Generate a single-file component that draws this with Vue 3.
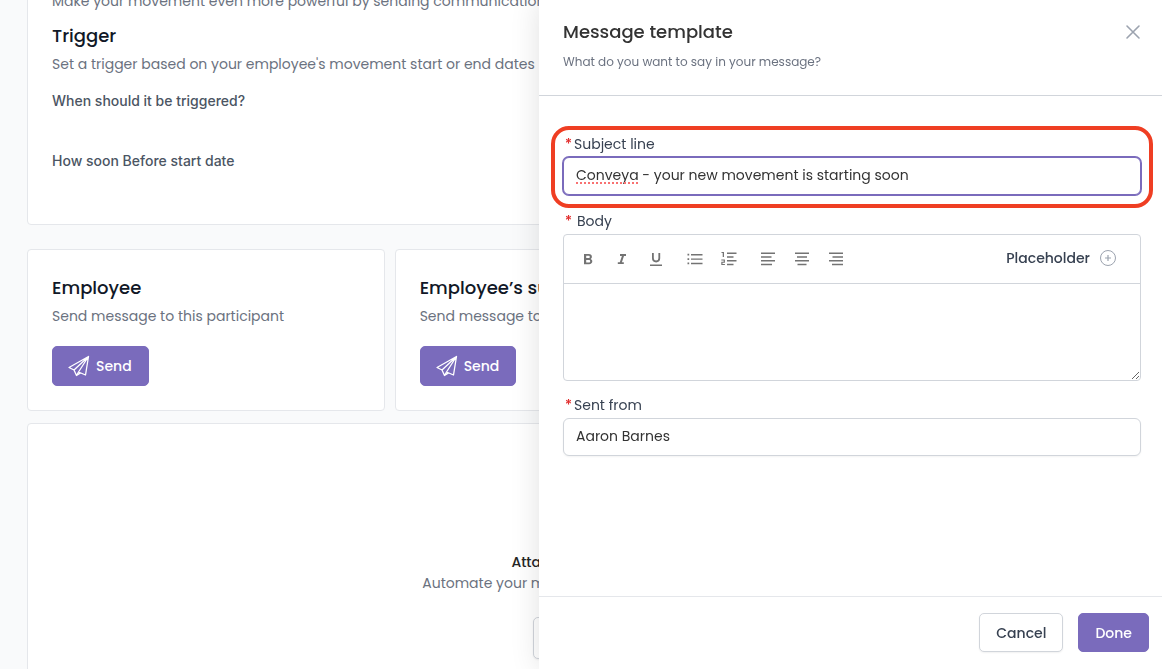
<script setup>
import { ref } from 'vue'

const subject = ref('Conveya - your new movement is starting soon')
const body = ref('')
const sender = ref('Aaron Barnes')

const recipients = [
  { title: 'Employee', text: 'Send message to this participant' },
  { title: 'Employee’s supervisor', text: 'Send message to this participant' },
]

const toolGroups = [
  [
    { name: 'Bold', fill: 'M5 4h4.800c1.900 0 3.100 1.100 3.100 2.700 0 1-.5 1.800-1.200 2.200 1 .4 1.600 1.300 1.600 2.400 0 1.700-1.300 2.900-3.200 2.900H5zM7.200 5.800v2.300h2.400c.7 0 1.200-.5 1.200-1.150S10.300 5.800 9.600 5.800zM7.200 9.900v2.500h2.700c.8 0 1.300-.5 1.300-1.250s-.5-1.250-1.300-1.250z' },
    { name: 'Italic', fill: 'M7 4h6v1.900h-2L8.900 12.200h1.900v1.900h-6v-1.900h2L8.900 5.900H7z' },
    { name: 'Underline', fill: 'M5 3h1.800v5.300a2.300 2.300 0 0 0 4.600 0V3h1.800v5.300a4.100 4.100 0 0 1-8.200 0zM3 14.500h12V16H3z' },
  ],
  [
    { name: 'Bulleted list', fill: 'M1.500 3.800h1.700v1.700H1.500zM1.500 8.200h1.700v1.700H1.500zM1.500 12.600h1.700v1.700H1.500zM5 4h11.500v1.400H5zM5 8.400h11.500v1.400H5zM5 12.800h11.500v1.400H5z' },
    { name: 'Numbered list', fill: 'M1.500 2h2.500v5H2.700V3.100H1.500zM1.300 9.500h3.600v3.200H2.500v1.200h2.400V15H1.300v-3.300h2.400v-1.100H1.300zM7 2.500h9.500v1.600H7zM7 6.200h6.500v1.600H7zM7 10h9.500v1.600H7zM7 13.700h6.500v1.600H7z' },
  ],
  [
    { name: 'Align left', fill: 'M2 2.500h14v1.600H2zM2 6.200h10.500v1.600H2zM2 10h14v1.600H2zM2 13.700h11v1.600H2z' },
    { name: 'Align center', fill: 'M2 2.500h14v1.600H2zM4 6.200h10v1.600H4zM2 10h14v1.600H2zM4.500 13.700h9v1.600h-9z' },
    { name: 'Align right', fill: 'M2 2.500h14v1.600H2zM5.500 6.200H16v1.600H5.500zM2 10h14v1.600H2zM5 13.700h11v1.600H5z' },
  ],
]
</script>

<template>
  <div class="page">
    <main class="content">
      <section class="card trigger">
        <p class="muted">Make your movement even more powerful by sending communications</p>
        <h2>Trigger</h2>
        <p class="muted">Set a trigger based on your employee's movement start or end dates</p>
        <h3>When should it be triggered?</h3>
        <h3>How soon Before start date</h3>
      </section>

      <div class="recipients">
        <section v-for="r in recipients" :key="r.title" class="card recipient">
          <h2>{{ r.title }}</h2>
          <p class="muted">{{ r.text }}</p>
          <button type="button" class="btn primary send">
            <svg width="22" height="22" viewBox="0 0 22 22" fill="none" stroke="currentColor" stroke-width="1.300" stroke-linejoin="round" stroke-linecap="round" aria-hidden="true">
              <path d="M20.500 1.500 1 12.500l5 2.500zM20.500 1.500 6 15l2.500 5.500L10.500 17zM20.500 1.500 10.500 17l7 3zM8.500 20.500l4-2.600" />
            </svg>
            Send
          </button>
        </section>
      </div>

      <section class="card attach">
        <h4>Attach document</h4>
        <p class="muted">Automate your movement with documents</p>
        <button type="button" class="btn outline add">Attach</button>
      </section>
    </main>

    <aside class="drawer" role="dialog" aria-labelledby="drawer-title">
      <header class="drawer-head">
        <div>
          <h1 id="drawer-title">Message template</h1>
          <p>What do you want to say in your message?</p>
        </div>
        <button type="button" class="close" aria-label="Close">
          <svg width="16" height="16" viewBox="0 0 16 16" fill="none" stroke="currentColor" stroke-width="1.600" stroke-linecap="round" aria-hidden="true">
            <path d="M2 2l12 12M14 2 2 14" />
          </svg>
        </button>
      </header>

      <form class="drawer-body" @submit.prevent>
        <div class="field highlight">
          <label for="subject"><span class="star">*</span>Subject line</label>
          <div class="input-wrap">
            <input id="subject" v-model="subject" class="focused" type="text" spellcheck="false" />
            <span class="squiggle" aria-hidden="true"></span>
          </div>
        </div>

        <div class="field body-field">
          <label for="body" class="spaced"><span class="star">*</span>Body</label>
          <div class="editor">
            <div class="toolbar">
              <div v-for="(group, i) in toolGroups" :key="i" class="tools">
                <button v-for="t in group" :key="t.name" type="button" class="tool" :aria-label="t.name">
                  <svg width="18" height="18" viewBox="0 0 18 18" fill="currentColor" fill-rule="evenodd" aria-hidden="true">
                    <path :d="t.fill" />
                  </svg>
                </button>
              </div>
              <button type="button" class="placeholder">
                Placeholder
                <svg width="18" height="18" viewBox="0 0 18 18" fill="none" stroke="currentColor" aria-hidden="true">
                  <circle cx="9" cy="9" r="7.500" />
                  <path d="M9 6v6M6 9h6" stroke-width="1.200" />
                </svg>
              </button>
            </div>
            <textarea id="body" v-model="body"></textarea>
          </div>
        </div>

        <div class="field">
          <label for="sender"><span class="star">*</span>Sent from</label>
          <input id="sender" v-model="sender" type="text" />
        </div>
      </form>

      <footer class="drawer-foot">
        <button type="button" class="btn outline">Cancel</button>
        <button type="button" class="btn primary">Done</button>
      </footer>
    </aside>
  </div>
</template>

<style>
body {
  background: #f9fafb;
}
</style>

<style scoped>
.page,
.page * {
  box-sizing: border-box;
}
.page {
  height: 100vh;
  overflow: hidden;
  background: #f9fafb;
  color: #111827;
  font: 14px/24px Poppins, Inter, "Open Sans", sans-serif;
}
h1, h2, h3, h4, p {
  margin: 0;
}
button, input, textarea {
  font: inherit;
}
button {
  cursor: pointer;
}
.content {
  display: flex;
  flex-direction: column;
  height: 100%;
  padding: 0 42px 0 27px;
}
.card {
  background: #fff;
  border: 1px solid #e5e7eb;
  border-radius: 4px;
}
.card h2 {
  font-size: 18px;
  line-height: 28px;
  font-weight: 500;
  white-space: nowrap;
}
.muted {
  margin-top: 2px;
  color: #6b7280;
  white-space: nowrap;
}
.trigger {
  flex: none;
  margin-top: -14px;
  padding: 0 24px 53px;
}
.trigger h2 {
  margin-top: 9px;
}
.trigger h3 {
  margin-top: 15px;
  font: 500 14px/20px Inter, sans-serif;
  color: #4b5563;
}
.trigger h3 + h3 {
  margin-top: 40px;
}
.recipients {
  display: grid;
  grid-template-columns: repeat(3, 1fr);
  gap: 10px;
  margin: 24px 0 12px;
}
.recipient {
  padding: 24px;
  overflow: hidden;
}
.btn {
  height: 39px;
  padding: 0 16px;
  border: 1px solid #7a6bbc;
  border-radius: 5px;
  font-size: 14px;
  line-height: 20px;
  font-weight: 500;
}
.primary {
  background: #7a6bbc;
  color: #fff;
}
.outline {
  background: #fff;
  border-color: #d1d5db;
  color: #374151;
  box-shadow: 0 1px 2px rgba(0, 0, 0, 0.06);
}
.send {
  display: flex;
  align-items: center;
  gap: 6px;
  height: 40px;
  margin-top: 18px;
  padding: 0 16px 0 15px;
}
.attach {
  flex: 1;
  display: flex;
  flex-direction: column;
  align-items: center;
  padding-top: 128px;
  margin-bottom: -10px;
}
.attach h4 {
  font-size: 14px;
  line-height: 20px;
  font-weight: 500;
  color: #262626;
}
.attach .muted {
  margin-top: 0;
  line-height: 22px;
}
.add {
  flex: none;
  height: 42px;
  margin-top: 23px;
}

.drawer {
  position: fixed;
  inset: 0 0 0 auto;
  width: calc(50% + 42px);
  display: flex;
  flex-direction: column;
  background: #fff;
  box-shadow: 0 0 28px rgba(0, 0, 0, 0.12);
}
.drawer-head {
  display: flex;
  justify-content: space-between;
  align-items: flex-start;
  height: 96px;
  padding: 18px 21px 0 24px;
  border-bottom: 1px solid #d1d5db;
}
.drawer-head h1 {
  font-size: 18px;
  line-height: 28px;
  font-weight: 500;
  color: #333;
}
.drawer-head p {
  margin-top: 6px;
  font-size: 12px;
  line-height: 20px;
  color: #6b7280;
}
.close {
  display: flex;
  margin-top: 6px;
  padding: 0;
  border: 0;
  background: none;
  color: #9ca3af;
}
.drawer-body {
  flex: 1;
  padding: 30px 21px 0 24px;
}
.field {
  display: flex;
  flex-direction: column;
  gap: 3px;
}
.field label {
  padding-left: 2px;
  font-size: 14px;
  line-height: 20px;
  color: #374151;
}
.star {
  display: inline-block;
  width: 9px;
  color: #e02424;
  font-weight: 500;
}
.spaced .star {
  width: 12px;
}
.highlight {
  margin: 0 -12px;
  padding: 4px 8px 9px;
  border: 4px solid #ef3e23;
  border-radius: 18px;
}
input {
  width: 100%;
  height: 38px;
  padding: 0 12px 1px;
  border: 1px solid #d1d5db;
  border-radius: 6px;
  outline: 0;
  color: #333;
  font-size: 14px;
  box-shadow: 0 1px 2px rgba(0, 0, 0, 0.05);
}
.input-wrap {
  position: relative;
  display: flex;
}
.focused {
  border-color: #7a6bbc;
  box-shadow: 0 0 0 1px #7a6bbc;
}
.squiggle {
  position: absolute;
  left: 13px;
  bottom: 11px;
  width: 62px;
  border-bottom: 2px dotted #f87171;
}
.body-field {
  margin: 3px 0 14px;
}
.editor {
  display: flex;
  flex-direction: column;
  border: 1px solid #d1d5db;
  border-radius: 4px;
}
.toolbar {
  display: flex;
  align-items: center;
  gap: 5px;
  height: 49px;
  padding: 0 23px 0 7px;
  border-bottom: 1px solid #d1d5db;
}
.tools {
  display: flex;
}
.tool {
  display: flex;
  align-items: center;
  justify-content: center;
  width: 34px;
  height: 34px;
  padding: 0;
  border: 0;
  background: none;
  color: #737373;
}
.placeholder {
  display: flex;
  align-items: center;
  gap: 9px;
  margin-left: auto;
  padding: 0 0 2px;
  border: 0;
  background: none;
  color: #374151;
  font-size: 14px;
  font-weight: 500;
}
.placeholder svg {
  color: #9ca3af;
}
textarea {
  width: 100%;
  height: 96px;
  padding: 12px;
  border: 0;
  outline: 0;
  background: none;
  resize: vertical;
}
.drawer-foot {
  display: flex;
  justify-content: flex-end;
  gap: 15px;
  padding: 16px 13px 17px;
  border-top: 1px solid #e5e7eb;
}
</style>
